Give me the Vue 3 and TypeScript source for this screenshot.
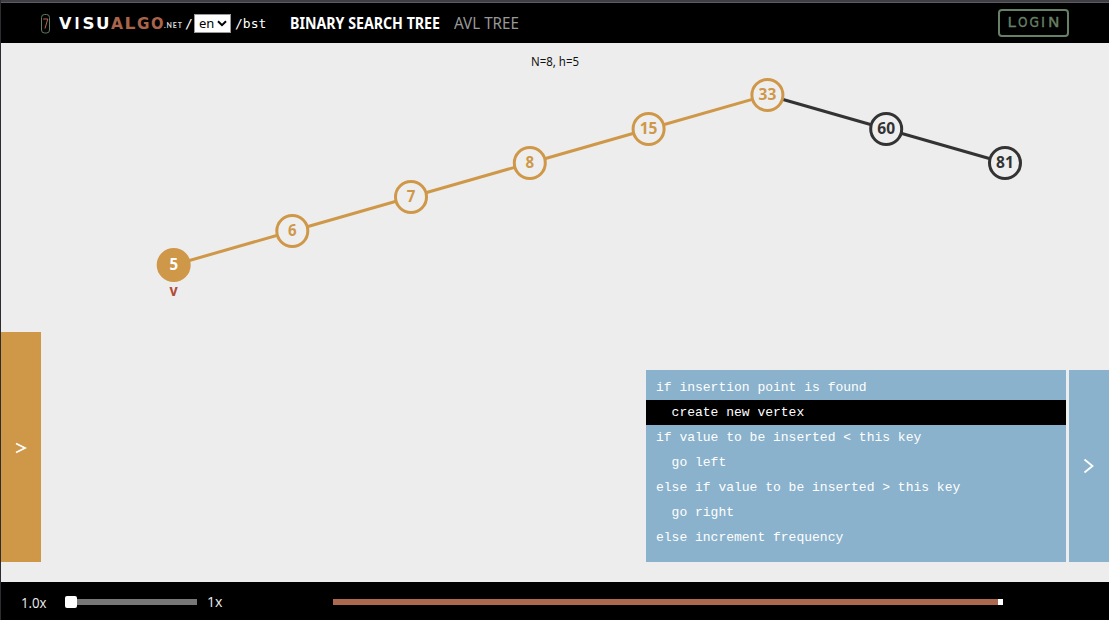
<script setup lang="ts">
interface Glyph { c: string; x: number; w: number; alt?: boolean }
interface Vertex { key: number; x: number; y: number; kind: 'path' | 'active' | 'plain' }

const brand: Glyph[] = [
  { c: 'V', x: 0, w: 12.5 },
  { c: 'I', x: 15.5, w: 5 },
  { c: 'S', x: 23.5, w: 12 },
  { c: 'U', x: 37, w: 13.5 },
  { c: 'A', x: 52, w: 12, alt: true },
  { c: 'L', x: 65.5, w: 11, alt: true },
  { c: 'G', x: 78, w: 12.5, alt: true },
  { c: 'O', x: 92, w: 12.5, alt: true },
]

const login: Glyph[] = [
  { c: 'L', x: 7.5, w: 8.5 },
  { c: 'O', x: 18, w: 9.5 },
  { c: 'G', x: 29.5, w: 9.5 },
  { c: 'I', x: 41, w: 4 },
  { c: 'N', x: 48, w: 11.5 },
]

const vertices: Vertex[] = [
  { key: 5, x: 173.7, y: 222, kind: 'active' },
  { key: 6, x: 292.3, y: 188, kind: 'path' },
  { key: 7, x: 411, y: 154, kind: 'path' },
  { key: 8, x: 529.8, y: 120, kind: 'path' },
  { key: 15, x: 648.6, y: 86, kind: 'path' },
  { key: 33, x: 767.4, y: 52, kind: 'path' },
  { key: 60, x: 886.2, y: 86, kind: 'plain' },
  { key: 81, x: 1005, y: 120, kind: 'plain' },
]

const edges = vertices.slice(1).map((to, i) => ({ from: vertices[i], to }))

const code: string[] = [
  'if insertion point is found',
  '  create new vertex',
  'if value to be inserted < this key',
  '  go left',
  'else if value to be inserted > this key',
  '  go right',
  'else increment frequency',
]
const currentLine = 1
const labelWidth = (key: number) => (key > 9 ? 17.8 : 8.6)
</script>

<template>
  <div class="app">
    <header class="topbar">
      <svg class="seven" width="10" height="20" viewBox="0 0 10 20">
        <rect x="0.5" y="0.5" width="8" height="18.5" rx="3" />
        <path d="M2.2 5H6.8L4 14.5" />
      </svg>
      <svg class="brand" width="105" height="20">
        <text v-for="g in brand" :key="g.c" :class="{ alt: g.alt }" :x="g.x" y="15.5" :textLength="g.w" lengthAdjust="spacingAndGlyphs">{{ g.c }}</text>
      </svg>
      <span class="net">.NET</span>
      <span class="mono slash">/</span>
      <div class="lang">
        <span>en</span>
        <svg width="10" height="7" viewBox="0 0 10 7"><path d="M1 1.2L5 5.2L9 1.2" /></svg>
      </div>
      <span class="mono path">/bst</span>
      <svg class="tab current" width="154" height="24">
        <text x="0" y="18" textLength="150" lengthAdjust="spacingAndGlyphs">BINARY SEARCH TREE</text>
      </svg>
      <svg class="tab" width="68" height="24">
        <text x="0" y="18" textLength="65" lengthAdjust="spacingAndGlyphs">AVL TREE</text>
      </svg>
      <button class="login" type="button">
        <svg width="67" height="24">
          <text v-for="g in login" :key="g.c" :x="g.x" y="16" :textLength="g.w" lengthAdjust="spacingAndGlyphs">{{ g.c }}</text>
        </svg>
      </button>
    </header>

    <main class="stage">
      <svg class="tree" width="1109" height="539" viewBox="0 0 1109 539">
        <text class="status" x="531" y="23" textLength="48" lengthAdjust="spacingAndGlyphs">N=8, h=5</text>
        <line
          v-for="e in edges" :key="e.to.key" :class="{ dark: e.to.kind === 'plain' }"
          :x1="e.from.x" :y1="e.from.y" :x2="e.to.x" :y2="e.to.y"
        />
        <g v-for="v in vertices" :key="v.key" :class="v.kind">
          <circle :cx="v.x" :cy="v.y" r="15.5" />
          <text
            :x="v.x - labelWidth(v.key) / 2" :y="v.y + 5.4"
            :textLength="labelWidth(v.key)" lengthAdjust="spacingAndGlyphs"
          >{{ v.key }}</text>
        </g>
        <text class="marker" x="169.6" y="253" textLength="8.2" lengthAdjust="spacingAndGlyphs">v</text>
      </svg>

      <div class="actions">
        <svg width="12" height="12" viewBox="0 0 12 12"><path d="M1 1.5L10 6L1 10.5" /></svg>
      </div>

      <div class="codetrace">
        <div class="lines">
          <div v-for="(line, i) in code" :key="i" class="line" :class="{ on: i === currentLine }">{{ line }}</div>
        </div>
        <div class="toggle">
          <svg width="12" height="16" viewBox="0 0 12 16"><path d="M1.5 1.5L9.5 8L1.5 14.5" /></svg>
        </div>
      </div>
    </main>

    <footer class="controls">
      <svg class="rate" width="28" height="20"><text x="0" y="17" textLength="25.5" lengthAdjust="spacingAndGlyphs">1.0x</text></svg>
      <div class="slider"><div class="thumb"></div></div>
      <svg class="speed" width="18" height="20"><text x="0" y="16" textLength="15.5" lengthAdjust="spacingAndGlyphs">1x</text></svg>
      <div class="progress"><div class="head"></div></div>
    </footer>
  </div>
</template>

<style>
html, body { margin: 0; background: #ededed; overflow: hidden; }
</style>

<style scoped>
.app {
  box-sizing: border-box;
  width: 1109px;
  height: 620px;
  display: flex;
  flex-direction: column;
  border-left: 1px solid #2d2d31;
  background: #ededed;
  font-family: "Noto Sans", "Open Sans", sans-serif;
  overflow: hidden;
}
svg { display: block; flex: none; }
.topbar {
  box-sizing: border-box;
  height: 43px;
  flex: none;
  display: flex;
  align-items: center;
  padding: 0 40px 0 40px;
  background: #000;
  border-top: 2px solid #3e3e44;
  box-shadow: inset 0 1px #5c5c62;
}
.seven { margin-top: 2px; fill: none; stroke-width: 1; }
.seven rect { stroke: #667b66; }
.seven path { stroke: #b8674f; }
.brand { margin-left: 8px; }
.brand text { font: bold 16px "DejaVu Sans", sans-serif; fill: #fff; }
.brand .alt { fill: #a9644b; }
.net { width: 21px; flex: none; font: bold 7px Lato, sans-serif; letter-spacing: .9px; color: #ddd; margin-top: 5px; white-space: nowrap; }
.mono { flex: none; font: 13px "DejaVu Sans Mono", monospace; color: #fff; }
.slash { width: 9px; margin-top: 2px; }
.lang {
  box-sizing: border-box;
  width: 37px;
  height: 19px;
  flex: none;
  display: flex;
  align-items: center;
  padding: 0 3px 1px 4px;
  justify-content: space-between;
  background: #fff;
  border: 1px solid #999;
  color: #000;
  font: 13px "Noto Sans", sans-serif;
  margin-top: 2px;
}
.lang svg { margin-top: 1px; }
.lang path { fill: none; stroke: #000; stroke-width: 2; }
.path { width: 55px; margin-left: 4px; margin-top: 2px; }
.tab text { font-size: 15.8px; fill: #999; }
.tab.current { margin-right: 10px; }
.tab.current text { font-weight: 700; fill: #fff; }
.login {
  box-sizing: border-box;
  width: 71px;
  height: 28px;
  margin: 1px 0 0 auto;
  padding: 0;
  border: 2px solid #668166;
  border-radius: 4px;
  background: #000;
}
.login text { font: 13.5px "DejaVu Sans", sans-serif; fill: #668166; stroke: #668166; stroke-width: .3; }
.stage { flex: 1; min-height: 0; display: grid; grid-template: 539px / 1108px; }
.stage > * { grid-area: 1 / 1; }
.tree { margin-left: -1px; }
.status { font-size: 13px; fill: #111; }
.tree line { stroke: #cf9849; stroke-width: 3; }
.tree line.dark { stroke: #333; }
.tree circle { fill: #eee; stroke-width: 3; }
.tree g text { font-size: 15.5px; font-weight: 700; }
.path circle, .active circle { stroke: #cf9849; }
.tree .path text { fill: #cf9849; }
.tree .active circle { fill: #cf9849; }
.tree .active text { fill: #fff; }
.plain circle { stroke: #333; }
.plain text { fill: #333; }
.marker { font-size: 15.5px; font-weight: 700; fill: #b34b36; }
.actions, .codetrace { align-self: end; margin-bottom: 20px; }
.actions { width: 40px; height: 230px; display: grid; place-items: center; background: #cf9849; }
.actions svg { margin-top: 1px; }
.actions path, .toggle path { fill: none; stroke: #fff; stroke-width: 1.8; }
.codetrace { justify-self: end; display: flex; gap: 3px; height: 192px; }
.lines { box-sizing: border-box; width: 420px; padding-top: 5px; background: #8ab2cc; }
.line { height: 25px; padding: 0 10px; font: 13px/25px "Liberation Mono", monospace; white-space: pre; color: #fff; }
.line.on { background: #000; }
.toggle { width: 40px; display: grid; place-items: center; background: #8ab2cc; }
.controls { height: 38px; flex: none; display: flex; align-items: center; padding-left: 20px; background: #000; }
.controls text { fill: #eee; font-size: 14px; font-family: "Open Sans", sans-serif; }
.controls .speed text { font-size: 15px; }
.slider { width: 132px; height: 6px; margin: 2px 10px 0 16px; display: flex; align-items: center; background: #777; }
.thumb { width: 12px; height: 12px; flex: none; border-radius: 2px; background: #fff; }
.progress { width: 670px; height: 6px; margin: 2px 0 0 108px; display: flex; justify-content: flex-end; background: #ad6850; }
.head { width: 5px; background: #fff; }
</style>
